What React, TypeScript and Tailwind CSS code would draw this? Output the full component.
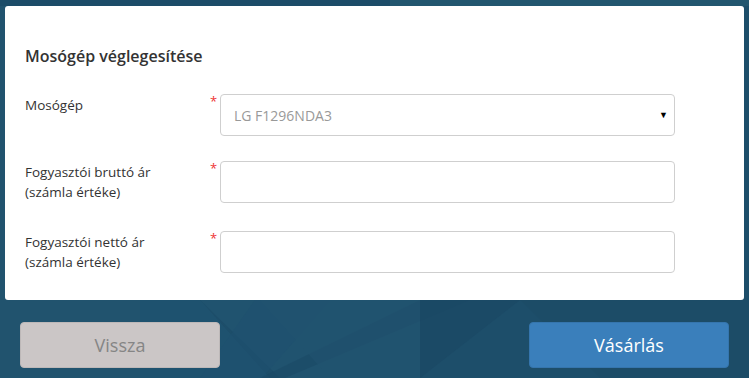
import React from "react";

const font = { fontFamily: '"Open Sans", "Noto Sans", sans-serif' };

function Row({ lines, select }: { lines: string[]; select?: boolean }) {
  return (
    <div className="flex items-start">
      <div className="w-[185px] text-[13.5px] leading-[20px] text-[#333] pt-[1px]">
        {lines.map((l) => (
          <div key={l}>{l}</div>
        ))}
      </div>
      <div className="w-[10px] text-[13px] leading-[13px] text-[#e33] pt-[1px]">*</div>
      <div className="relative w-[455px] h-[42px] rounded-[4px] border border-[#cfcfcf] bg-white flex items-center pl-[13px]">
        {select && (
          <>
            <span className="text-[14px] text-[#999]">LG F1296NDA3</span>
            <span className="absolute right-[6px] top-[13px] text-[9px] text-black">▼</span>
          </>
        )}
      </div>
    </div>
  );
}

export default function App() {
  return (
    <div className="relative w-[749px] h-[378px] overflow-hidden bg-[#1d4e6a]" style={font}>
      <svg className="absolute inset-0" width="749" height="378" viewBox="0 0 749 378">
        <polygon points="0,0 140,0 140,378 0,378" fill="#21536e" />
        <polygon points="140,300 200,300 270,378 140,378" fill="#1f5470" opacity="0.8" />
        <polygon points="200,300 420,300 420,378 280,378" fill="#20536f" />
        <polygon points="420,300 470,300 285,378 260,378" fill="#1b4a66" opacity="0.6" />
        <polygon points="255,300 330,300 262,378 200,378" fill="#1e5070" opacity="0.5" />
        <polygon points="260,300 420,300 420,378 330,378" fill="#21546f" opacity="0.6" />
        <polygon points="420,300 520,300 420,378" fill="#1b4864" opacity="0.6" />
        <polygon points="520,300 749,300 749,378 600,378" fill="#1c4b67" opacity="0.7" />
        <polygon points="390,0 749,0 749,6 390,6" fill="#22566f" />
        <polygon points="0,0 390,0 390,6 0,6" fill="#1c4c68" />
      </svg>
      <div className="relative ml-[5px] mt-[6px] w-[739px] h-[294px] rounded-[3px] bg-white pt-[40px] pl-[20px]">
        <div className="text-[16px] leading-[20px] font-semibold text-[#333]">Mosógép véglegesítése</div>
        <div className="mt-[28px] flex flex-col">
          <Row lines={["Mosógép"]} select />
          <div className="mt-[25px]">
            <Row lines={["Fogyasztói bruttó ár", "(számla értéke)"]} />
          </div>
          <div className="mt-[28px]">
            <Row lines={["Fogyasztói nettó ár", "(számla értéke)"]} />
          </div>
        </div>
      </div>
      <div className="relative mt-[22px] flex justify-between px-[20px]">
        <button className="w-[200px] h-[46px] rounded-[4px] border border-[#bdb8b8] bg-[#cbc6c6] text-[18px] text-[#858585]">
          Vissza
        </button>
        <button className="w-[200px] h-[46px] rounded-[4px] border border-[#3575ad] bg-[#3a7fbb] text-[18px] text-white">
          Vásárlás
        </button>
      </div>
    </div>
  );
}
